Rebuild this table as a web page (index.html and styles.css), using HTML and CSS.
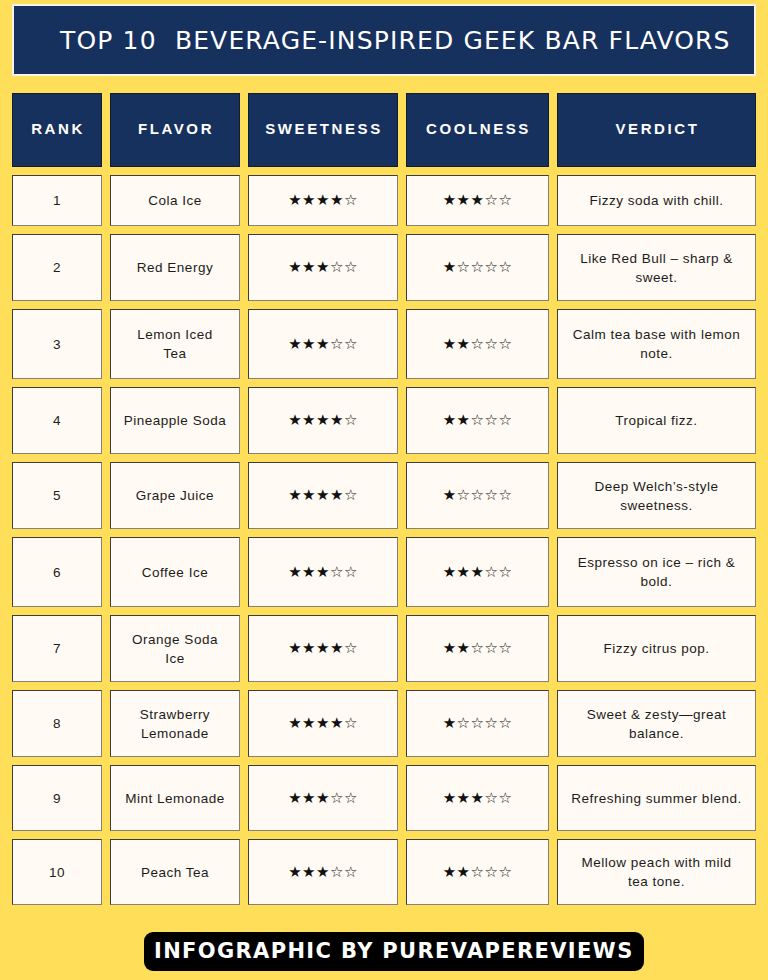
FILE: index.html
```html
<!DOCTYPE html>
<html lang="en">
<head>
<meta charset="utf-8">
<title>Top 10 Beverage-Inspired Geek Bar Flavors</title>
<link rel="stylesheet" href="styles.css">
</head>
<body>
<div class="page">
  <header class="title-box">
    <h1 class="title">TOP 10&nbsp; BEVERAGE-INSPIRED GEEK BAR FLAVORS</h1>
  </header>

  <div class="table">
    <div class="th">RANK</div>
    <div class="th">FLAVOR</div>
    <div class="th">SWEETNESS</div>
    <div class="th">COOLNESS</div>
    <div class="th">VERDICT</div>

    <div class="td">1</div>
    <div class="td">Cola Ice</div>
    <div class="td stars">★★★★☆</div>
    <div class="td stars">★★★☆☆</div>
    <div class="td">Fizzy soda with chill.</div>

    <div class="td">2</div>
    <div class="td">Red Energy</div>
    <div class="td stars">★★★☆☆</div>
    <div class="td stars">★☆☆☆☆</div>
    <div class="td">Like Red Bull – sharp &amp;<br>sweet.</div>

    <div class="td">3</div>
    <div class="td">Lemon Iced<br>Tea</div>
    <div class="td stars">★★★☆☆</div>
    <div class="td stars">★★☆☆☆</div>
    <div class="td">Calm tea base with lemon<br>note.</div>

    <div class="td">4</div>
    <div class="td">Pineapple Soda</div>
    <div class="td stars">★★★★☆</div>
    <div class="td stars">★★☆☆☆</div>
    <div class="td">Tropical fizz.</div>

    <div class="td">5</div>
    <div class="td">Grape Juice</div>
    <div class="td stars">★★★★☆</div>
    <div class="td stars">★☆☆☆☆</div>
    <div class="td">Deep Welch’s-style<br>sweetness.</div>

    <div class="td">6</div>
    <div class="td">Coffee Ice</div>
    <div class="td stars">★★★☆☆</div>
    <div class="td stars">★★★☆☆</div>
    <div class="td">Espresso on ice – rich &amp;<br>bold.</div>

    <div class="td">7</div>
    <div class="td">Orange Soda<br>Ice</div>
    <div class="td stars">★★★★☆</div>
    <div class="td stars">★★☆☆☆</div>
    <div class="td">Fizzy citrus pop.</div>

    <div class="td">8</div>
    <div class="td">Strawberry<br>Lemonade</div>
    <div class="td stars">★★★★☆</div>
    <div class="td stars">★☆☆☆☆</div>
    <div class="td">Sweet &amp; zesty—great<br>balance.</div>

    <div class="td">9</div>
    <div class="td">Mint Lemonade</div>
    <div class="td stars">★★★☆☆</div>
    <div class="td stars">★★★☆☆</div>
    <div class="td">Refreshing summer blend.</div>

    <div class="td">10</div>
    <div class="td">Peach Tea</div>
    <div class="td stars">★★★☆☆</div>
    <div class="td stars">★★☆☆☆</div>
    <div class="td">Mellow peach with mild<br>tea tone.</div>
  </div>

  <footer class="footer">
    <span class="credit">INFOGRAPHIC BY PUREVAPEREVIEWS</span>
  </footer>
</div>
</body>
</html>
```

FILE: styles.css
```css
* { box-sizing: border-box; }

html, body {
  margin: 0;
  padding: 0;
  background: #ffde59;
}

body {
  font-family: "Liberation Sans", Arial, sans-serif;
  color: #1c1c1c;
}

.page {
  width: 768px;
  height: 980px;
  padding: 4px 12px 0 12px;
}

.title-box {
  height: 72px;
  background: #17315e;
  border: 2px solid #f4f2ea;
  display: flex;
  align-items: center;
  padding-left: 46px;
}

.title {
  margin: 0;
  font-family: "DejaVu Sans", "Open Sans", sans-serif;
  font-weight: 400;
  font-size: 25px;
  letter-spacing: 1.15px;
  color: #ffffff;
  white-space: nowrap;
  line-height: 1;
  padding-top: 1px;
}

.table {
  margin-top: 17px;
  display: grid;
  grid-template-columns: 90px 130px 150px 143px 199px;
  grid-template-rows: 74px 51px 67px 70px 67px 67px 70px 67px 67px 66px 66px;
  gap: 8px;
}

.th {
  background: #17315e;
  border: 1.5px solid #0f1d33;
  color: #ffffff;
  font-weight: 700;
  font-size: 15px;
  letter-spacing: 2.6px;
  display: flex;
  align-items: center;
  justify-content: center;
  padding: 0 0 3px 2px;
}

.td {
  background: #fffaf3;
  border: 1.5px solid;
  border-color: #3d3d3d #85817a #85817a #3d3d3d;
  display: flex;
  align-items: center;
  justify-content: center;
  text-align: center;
  font-size: 13.5px;
  letter-spacing: 0.5px;
  line-height: 19px;
  white-space: nowrap;
  padding: 0;
}

.stars {
  font-family: "DejaVu Sans", sans-serif;
  font-size: 15px;
  letter-spacing: 0.5px;
  color: #111;
}

.footer {
  margin-top: 27px;
  padding-left: 132px;
}

.credit {
  display: inline-block;
  background: #000000;
  color: #ffffff;
  font-family: "DejaVu Sans", "Open Sans", sans-serif;
  font-weight: 700;
  font-size: 21px;
  line-height: 39px;
  height: 39px;
  padding: 0 10px;
  border-radius: 9px;
  letter-spacing: 1.35px;
  white-space: nowrap;
}
```
